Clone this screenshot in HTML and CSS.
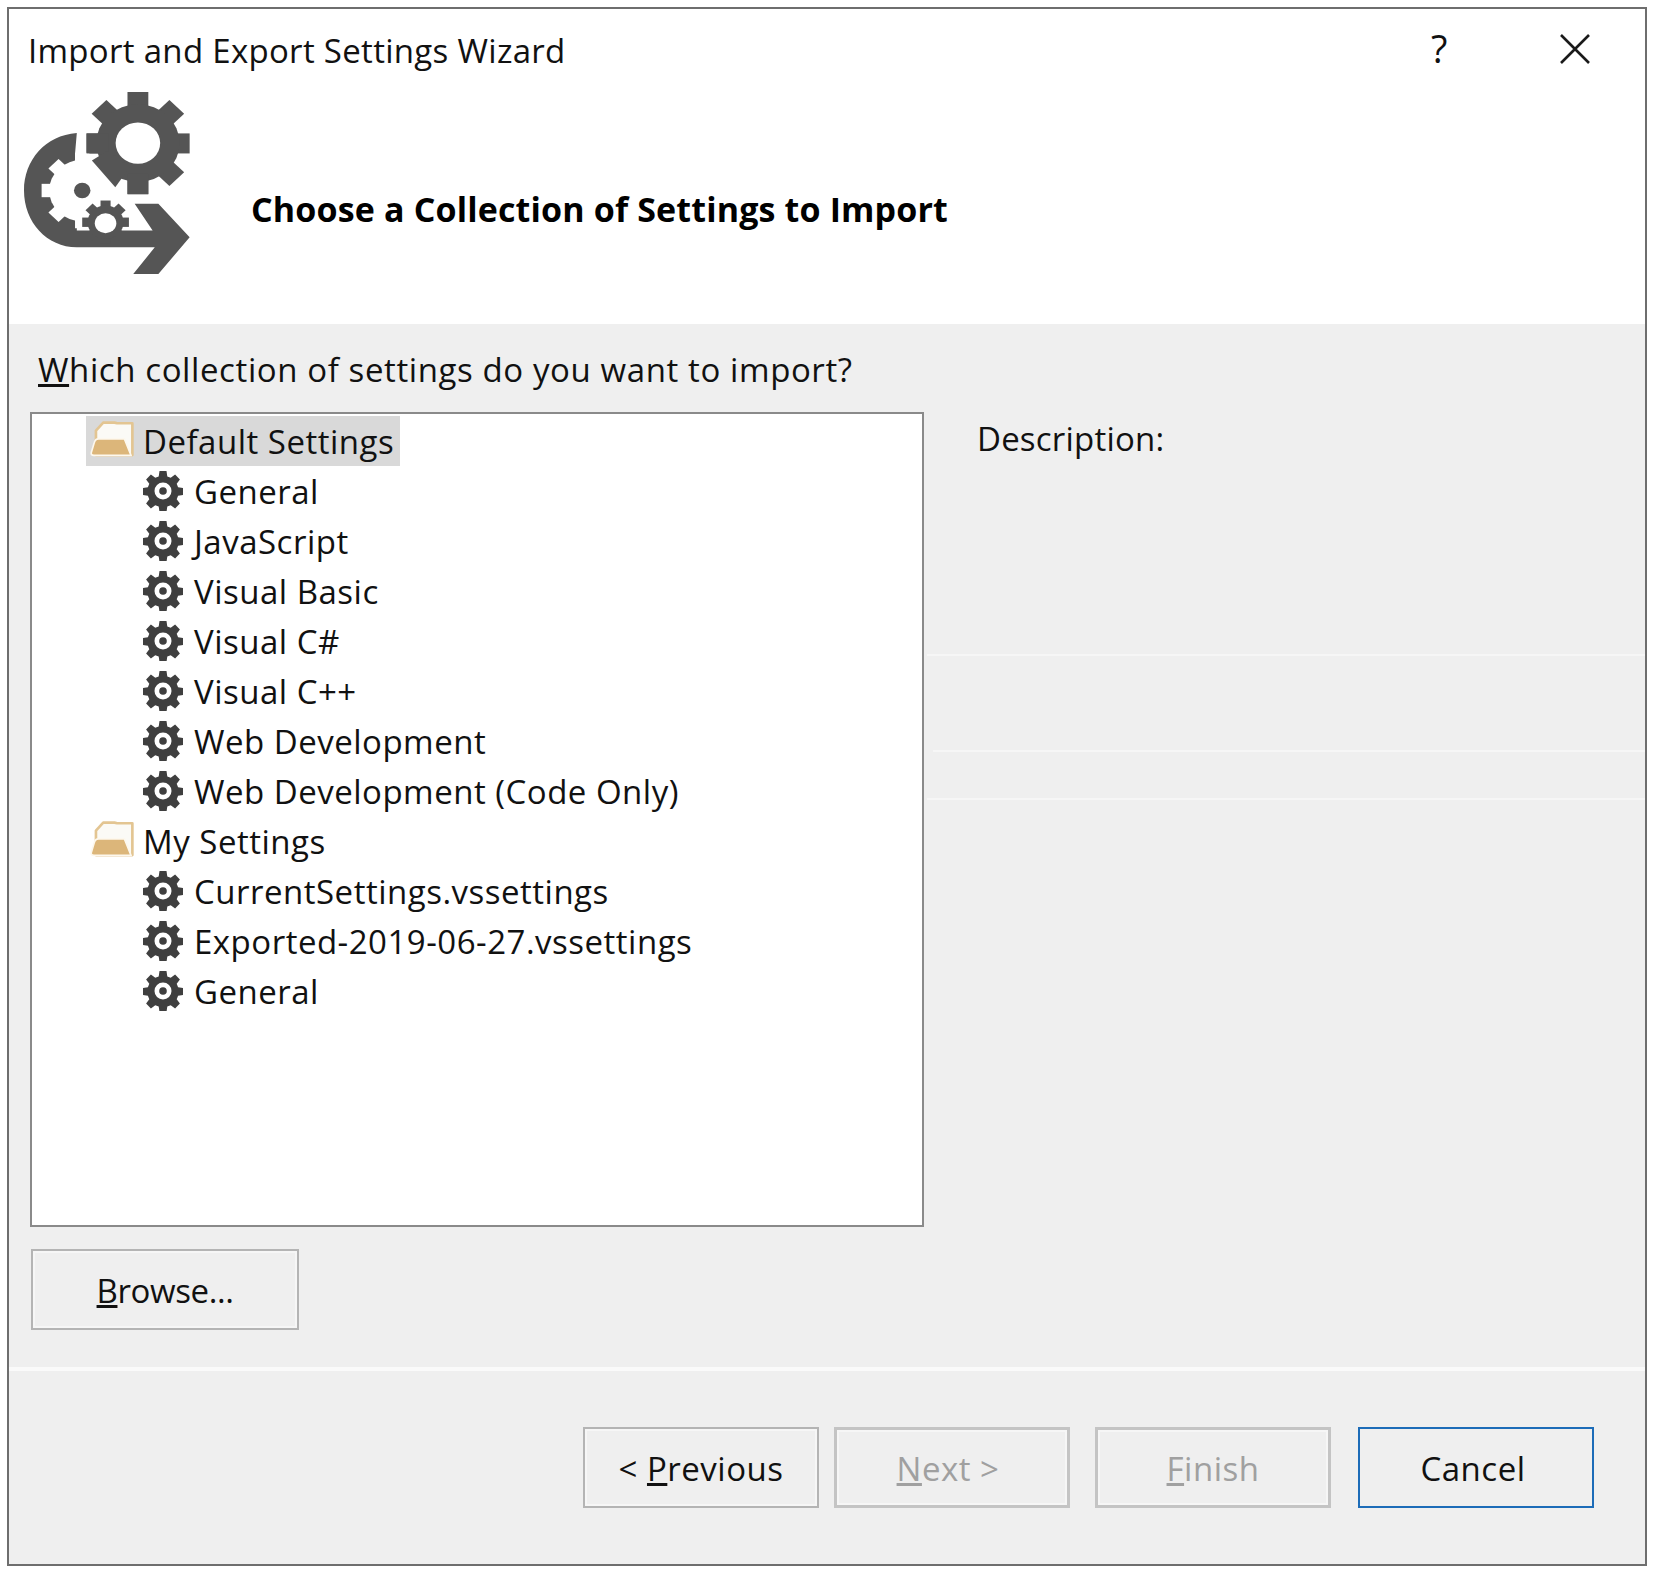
FILE: index.html
```html
<!DOCTYPE html>
<html>
  <head>
    <title>Import and Export Settings Wizard</title>
    <meta charset="utf-8">
    <link rel="stylesheet" href="styles.css">
  </head>
  <body>
    <svg class="defs" width="0" height="0">
      <symbol id="gear" viewBox="0 0 40 40">
        <path fill-rule="evenodd" fill="#3f3f3f" d="M16.500 0h7l.8 5.400 3.400 1.400 4.400-3.200 4.800 4.800-3.200 4.400 1.400 3.400 5.400.8v7l-5.400.8-1.400 3.400 3.200 4.400-4.800 4.800-4.400-3.200-3.400 1.400-.8 5.400h-7l-.8-5.400-3.400-1.400-4.400 3.200-4.800-4.800 3.200-4.400-1.400-3.400-5.400-.8v-7l5.400-.8 1.400-3.400-3.200-4.400 4.800-4.800 4.400 3.200 3.400-1.400zM20 11.500a8.500 8.500 0 1 0 0 17 8.500 8.500 0 0 0 0-17z"/>
        <circle cx="20" cy="20" r="3.800" fill="#3f3f3f"/>
      </symbol>
      <symbol id="folder" viewBox="205 55 145 122">
        <path d="M226 125V92l22-24h34l8 2h46v96H226z" fill="#fbfaf6" stroke="#e3c592" stroke-width="8" stroke-linejoin="round"/>
        <path d="M250 117h62l20 50H220q-10 0-8-9l9-30q3-11 13-11z" fill="#dcb67a" stroke="#fdf8ee" stroke-width="5"/>
      </symbol>
    </svg>

    <div class="wizard">
      <div class="header">
        <div class="titlebar">
          <span class="title">Import and Export Settings Wizard</span>
          <span class="help">?</span>
          <svg class="close" viewBox="0 0 30 30"><path d="M1 1l28 28M29 1L1 29" stroke="#1a1a1a" stroke-width="2.600" fill="none"/></svg>
        </div>
        <div class="banner">
          <svg class="logo" viewBox="66 275 462 548" preserveAspectRatio="none">
            <g fill="#555">
              <path d="M213 398C125 405 66 480 66 570c0 95 64 170 147 170h217l-60 80h70l87-110-87-100h-66l50 80H213v-30l-5-200z"/>
              <rect x="354" y="275" width="58" height="306"/>
              <rect x="240" y="399" width="287" height="60"/>
              <rect x="354" y="275" width="58" height="306" transform="rotate(45 383 428)"/>
              <rect x="354" y="275" width="58" height="306" transform="rotate(-45 383 428)"/>
              <circle cx="383" cy="428" r="116"/>
            </g>
            <circle cx="383" cy="428" r="62" fill="#fff"/>
            <g fill="#fff">
              <circle cx="228" cy="570" r="92"/>
              <rect x="208" y="457" width="40" height="226"/>
              <rect x="115" y="550" width="226" height="40"/>
              <rect x="208" y="457" width="40" height="226" transform="rotate(45 228 570)"/>
              <rect x="208" y="457" width="40" height="226" transform="rotate(-45 228 570)"/>
            </g>
            <g fill="#555">
              <rect x="240" y="399" width="60" height="60"/>
              <rect x="354" y="520" width="58" height="61"/>
              <path d="M255 480l45-30 60 50-40 60z"/>
              <circle cx="228" cy="570" r="23"/>
              <rect x="279" y="600" width="28" height="130"/>
              <rect x="228" y="651" width="130" height="28"/>
              <rect x="279" y="600" width="28" height="130" transform="rotate(45 293 665)"/>
              <rect x="279" y="600" width="28" height="130" transform="rotate(-45 293 665)"/>
              <circle cx="293" cy="665" r="50"/>
            </g>
            <circle cx="293" cy="668" r="30" fill="#fff"/>
          </svg>
          <h1 class="heading">Choose a Collection of Settings to Import</h1>
        </div>
      </div>

      <div class="content">
        <p class="question"><u>W</u>hich collection of settings do you want to import?</p>
        <div class="columns">
          <div class="tree">
            <div class="row folder-row selected"><svg class="folder"><use href="#folder"/></svg><span>Default Settings</span></div>
            <div class="row item-row"><svg class="gear"><use href="#gear"/></svg><span>General</span></div>
            <div class="row item-row"><svg class="gear"><use href="#gear"/></svg><span>JavaScript</span></div>
            <div class="row item-row"><svg class="gear"><use href="#gear"/></svg><span>Visual Basic</span></div>
            <div class="row item-row"><svg class="gear"><use href="#gear"/></svg><span>Visual C#</span></div>
            <div class="row item-row"><svg class="gear"><use href="#gear"/></svg><span>Visual C++</span></div>
            <div class="row item-row"><svg class="gear"><use href="#gear"/></svg><span>Web Development</span></div>
            <div class="row item-row"><svg class="gear"><use href="#gear"/></svg><span>Web Development (Code Only)</span></div>
            <div class="row folder-row"><svg class="folder"><use href="#folder"/></svg><span>My Settings</span></div>
            <div class="row item-row"><svg class="gear"><use href="#gear"/></svg><span>CurrentSettings.vssettings</span></div>
            <div class="row item-row"><svg class="gear"><use href="#gear"/></svg><span>Exported-2019-06-27.vssettings</span></div>
            <div class="row item-row"><svg class="gear"><use href="#gear"/></svg><span>General</span></div>
          </div>
          <div class="side">
            <div class="description">Description:</div>
            <div class="rule rule-a"></div>
            <div class="rule rule-b"></div>
            <div class="rule rule-c"></div>
          </div>
        </div>
        <button class="btn browse"><u>B</u>rowse...</button>
      </div>

      <div class="footer">
        <button class="btn">&lt; <u>P</u>revious</button>
        <button class="btn disabled next"><u>N</u>ext &gt;</button>
        <button class="btn disabled finish"><u>F</u>inish</button>
        <button class="btn default">Cancel</button>
      </div>
    </div>
  </body>
</html>
```

FILE: styles.css
```css
html, body{
  margin: 0;
  height: 100%;
  background-color: #fff;
}
body{
  padding: 7px 6px 7px 7px;
  box-sizing: border-box;
  font-family: "Open Sans", "Noto Sans", sans-serif;
  font-size: 33px;
  letter-spacing: 0.5px;
  color: #111;
}
.defs{
  position: absolute;
}
.wizard{
  height: 1559px;
  box-sizing: border-box;
  border: 2px solid #6e6e6e;
  background-color: #efefef;
  display: flex;
  flex-direction: column;
}
.header{
  background-color: #fff;
  height: 315px;
  flex: none;
}
.titlebar{
  display: flex;
  align-items: center;
  height: 82px;
  padding: 0 55px 0 19px;
}
.title{
  flex: 1;
  letter-spacing: 0.3px;
}
.help{
  margin: 0 112px 4px 0;
  font-size: 38px;
  line-height: 1;
}
.close{
  width: 30px;
  height: 30px;
  margin-bottom: 2px;
}
.banner{
  display: flex;
  align-items: flex-start;
  padding-left: 15px;
}
.logo{
  width: 166px;
  height: 183px;
  margin-top: 1px;
}
.heading{
  margin: 95px 0 0 61px;
  font-size: 34px;
  letter-spacing: 0.15px;
  font-weight: 700;
  color: #000;
}
.content{
  flex: none;
  padding: 0 0 0 21px;
}
.question{
  margin: 24px 0 20px 8px;
  height: 44px;
  line-height: 44px;
  letter-spacing: 0.6px;
}
.columns{
  display: flex;
}
.tree{
  flex: none;
  width: 890px;
  height: 809px;
  background-color: #fff;
  border: 2px solid #8a8a8a;
  padding-top: 2px;
}
.row{
  display: flex;
  align-items: center;
  height: 50px;
  width: max-content;
}
.folder-row{
  margin-left: 54px;
  padding: 0 6px 0 3px;
}
.selected{
  background-color: #d9d9d9;
}
.item-row{
  margin-left: 111px;
}
.folder{
  width: 48px;
  height: 41px;
  margin-right: 6px;
  position: relative;
  top: -3px;
}
.gear{
  width: 40px;
  height: 40px;
  margin-right: 11px;
}
.side{
  flex: 1;
  padding-left: 3px;
}
.description{
  margin: 4px 0 0 50px;
  letter-spacing: 0.2px;
  height: 45px;
}
.rule{
  height: 2px;
  background-color: #f6f6f6;
}
.rule-a{
  margin-top: 193px;
}
.rule-b{
  margin: 94px 0 0 6px;
}
.rule-c{
  margin-top: 46px;
}
.btn{
  width: 236px;
  height: 81px;
  padding: 2px 0 0;
  background-color: #efefef;
  border: 2px solid #b4b4b4;
  box-shadow: inset 0 0 0 2px #f6f6f6;
  font: inherit;
  letter-spacing: inherit;
  color: #111;
}
.browse{
  display: block;
  width: 268px;
  margin: 22px 0 0 1px;
  letter-spacing: -0.4px;
}
.footer{
  margin-top: 37px;
  border-top: 4px solid #fafafa;
  padding: 56px 0 0 574px;
  display: flex;
  gap: 15px;
}
.disabled{
  color: #a0a0a0;
  border: 3px solid #c4c4c4;
}
.next{
  padding-right: 8px;
}
.finish{
  margin-left: 10px;
}
.default{
  margin-left: 12px;
  padding-right: 6px;
  border-color: #1c6cb8;
  box-shadow: none;
}
```
